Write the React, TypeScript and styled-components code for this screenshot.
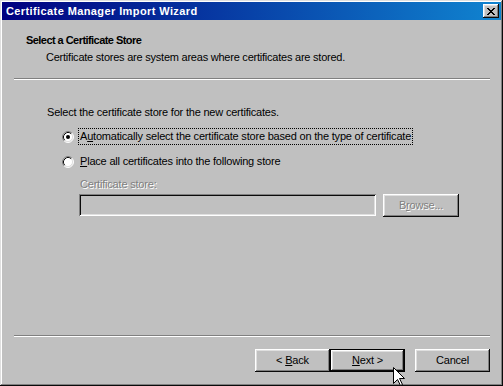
import React from 'react';
import styled, { createGlobalStyle } from 'styled-components';

const GlobalStyle = createGlobalStyle`
  html, body {
    margin: 0;
    padding: 0;
    background: #c0c0c0;
  }
  body {
    font-family: "Liberation Sans", Arial, sans-serif;
    font-size: 11px;
    letter-spacing: -0.2px;
    color: #000;
  }
`;

const Window = styled.div`
  position: relative;
  width: 503px;
  height: 386px;
  box-sizing: border-box;
  padding: 2px;
  background: #c0c0c0;
  box-shadow: inset -1px -1px #0a0a0a, inset 1px 1px #dfdfdf,
    inset -2px -2px #808080, inset 2px 2px #ffffff;
  display: flex;
  flex-direction: column;
  overflow: hidden;
`;

const TitleBar = styled.div`
  height: 18px;
  display: flex;
  align-items: center;
  justify-content: space-between;
  padding: 0 2px 0 4px;
  background: linear-gradient(to right, #000080, #1084d0);
  color: #fff;
  font-weight: bold;
  font-size: 11px;
  letter-spacing: 0.4px;
`;

const CloseButton = styled.div`
  width: 16px;
  height: 14px;
  box-sizing: border-box;
  background: #c0c0c0;
  box-shadow: inset -1px -1px #0a0a0a, inset 1px 1px #ffffff,
    inset -2px -2px #808080, inset 2px 2px #dfdfdf;
  display: flex;
  align-items: center;
  justify-content: center;
`;

const Header = styled.div`
  height: 58px;
  box-sizing: border-box;
  padding: 14px 0 0 24px;
`;

const HeaderTitle = styled.div`
  font-weight: bold;
  line-height: 13px;
  letter-spacing: -0.55px;
`;

const HeaderSubtitle = styled.div`
  margin: 4px 0 0 20px;
  line-height: 13px;
  letter-spacing: -0.23px;
`;

const Rule = styled.div`
  height: 0;
  border-top: 1px solid #808080;
  border-bottom: 1px solid #ffffff;
  margin: 0 11px 0 12px;
`;

const Body = styled.div`
  flex: 1;
  padding: 26px 0 0 45px;
`;

const Intro = styled.div`
  line-height: 13px;
`;

const RadioGroup = styled.div`
  margin: 9px 0 0 15px;
  display: flex;
  flex-direction: column;
  gap: 8px;
`;

const RadioRow = styled.div`
  display: flex;
  align-items: center;
  height: 17px;
`;

const RadioLabel = styled.span<{ $focused?: boolean }>`
  margin-left: 4px;
  padding: 1px 1px;
  line-height: 13px;
  border: 1px dotted ${({ $focused }) => ($focused ? '#000' : 'transparent')};
`;

const StoreField = styled.div`
  margin: 8px 0 0 33px;
`;

const DisabledText = styled.div`
  color: #808080;
  text-shadow: 1px 1px 0 #ffffff;
  line-height: 13px;
`;

const FieldRow = styled.div`
  display: flex;
  gap: 7px;
  margin: 3px 0 0 -1px;
`;

const StoreInput = styled.div`
  width: 297px;
  height: 22px;
  box-sizing: border-box;
  background: #c0c0c0;
  box-shadow: inset 1px 1px #808080, inset -1px -1px #ffffff,
    inset 2px 2px #0a0a0a, inset -2px -2px #dfdfdf;
`;

const Button = styled.div<{ $default?: boolean; $disabled?: boolean; $width?: number }>`
  width: ${({ $width }) => $width ?? 75}px;
  height: 23px;
  box-sizing: border-box;
  display: flex;
  align-items: center;
  justify-content: center;
  line-height: 13px;
  white-space: pre;
  background: #c0c0c0;
  border: ${({ $default }) => ($default ? '1px solid #000' : 'none')};
  box-shadow: inset -1px -1px #0a0a0a, inset 1px 1px #ffffff,
    inset -2px -2px #808080, inset 2px 2px #dfdfdf;
  color: ${({ $disabled }) => ($disabled ? '#808080' : '#000')};
  text-shadow: ${({ $disabled }) => ($disabled ? '1px 1px 0 #ffffff' : 'none')};
`;

const Footer = styled.div`
  display: flex;
  justify-content: flex-end;
  padding: 12px 11px 12px 0;
`;

const ButtonPair = styled.div`
  display: flex;
  margin-right: 10px;
`;

const Cursor = styled.svg`
  position: absolute;
  left: 393px;
  top: 367px;
`;

function Radio({ checked }: { checked?: boolean }) {
  return (
    <svg width="12" height="12" viewBox="0 0 12 12">
      <circle cx="6" cy="6" r="5" fill="#fff" />
      <path d="M2.11 9.89 A5.5 5.5 0 0 1 9.89 2.11" fill="none" stroke="#808080" />
      <path d="M9.89 2.11 A5.5 5.5 0 0 1 2.11 9.89" fill="none" stroke="#fff" />
      <path d="M2.82 9.18 A4.5 4.5 0 0 1 9.18 2.82" fill="none" stroke="#0a0a0a" />
      <path d="M9.18 2.82 A4.5 4.5 0 0 1 2.82 9.18" fill="none" stroke="#dfdfdf" />
      {checked && <circle cx="6" cy="6" r="2" fill="#000" />}
    </svg>
  );
}

export default function App() {
  return (
    <>
      <GlobalStyle />
      <Window>
        <TitleBar>
          <span>Certificate Manager Import Wizard</span>
          <CloseButton>
            <svg width="8" height="7" viewBox="0 0 8 7" shapeRendering="crispEdges">
              <path
                d="M0 0h2v1H0zM6 0h2v1H6zM1 1h2v1H1zM5 1h2v1H5zM2 2h4v1H2zM3 3h2v1H3zM2 4h4v1H2zM1 5h2v1H1zM5 5h2v1H5zM0 6h2v1H0zM6 6h2v1H6z"
                fill="#000"
              />
            </svg>
          </CloseButton>
        </TitleBar>

        <Header>
          <HeaderTitle>Select a Certificate Store</HeaderTitle>
          <HeaderSubtitle>Certificate stores are system areas where certificates are stored.</HeaderSubtitle>
        </Header>
        <Rule />

        <Body>
          <Intro>Select the certificate store for the new certificates.</Intro>
          <RadioGroup>
            <RadioRow>
              <Radio checked />
              <RadioLabel $focused>
                A<u>u</u>tomatically select the certificate store based on the type of certificate
              </RadioLabel>
            </RadioRow>
            <RadioRow>
              <Radio />
              <RadioLabel>
                <u>P</u>lace all certificates into the following store
              </RadioLabel>
            </RadioRow>
          </RadioGroup>
          <StoreField>
            <DisabledText>Certificate store:</DisabledText>
            <FieldRow>
              <StoreInput />
              <Button $disabled $width={76}>
                <span>B<u>r</u>owse...</span>
              </Button>
            </FieldRow>
          </StoreField>
        </Body>
        <Rule />

        <Footer>
          <ButtonPair>
            <Button>
              <span>&lt; <u>B</u>ack</span>
            </Button>
            <Button $default>
              <span><u>N</u>ext &gt;</span>
            </Button>
          </ButtonPair>
          <Button>
            <span>Cancel</span>
          </Button>
        </Footer>

        <Cursor width="12" height="20" viewBox="0 0 12 20">
          <polygon
            points="0.5,0.5 0.5,16.5 4.5,12.5 7.5,18.5 9.5,17.5 6.5,11.5 11.5,11.5"
            fill="#fff"
            stroke="#000"
            strokeWidth="1"
          />
        </Cursor>
      </Window>
    </>
  );
}
